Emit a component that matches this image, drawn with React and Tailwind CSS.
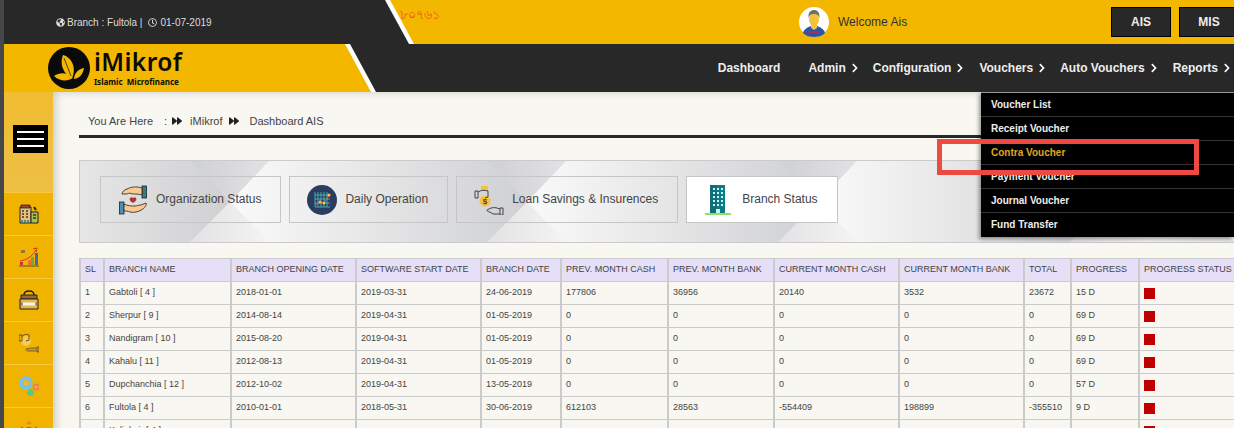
import { FaChevronRight, FaForward, FaGlobeAmericas, FaRegClock } from "react-icons/fa";

const NAV_ITEMS = ["Admin", "Configuration", "Vouchers", "Auto Vouchers", "Reports"];
const NAV_GAPS = ["mr-[14px]", "mr-[15px]", "mr-[14px]", "mr-[15px]", ""];
const MENU_ITEMS = ["Voucher List", "Receipt Voucher", "Contra Voucher", "Payment Voucher", "Journal Voucher", "Fund Transfer"];
const COLUMNS = [
  ["SL", "w-[24px]"],
  ["BRANCH NAME", "w-[127px]"],
  ["BRANCH OPENING DATE", "w-[125px]"],
  ["SOFTWARE START DATE", "w-[125px]"],
  ["BRANCH DATE", "w-[80px]"],
  ["PREV. MONTH CASH", "w-[107px]"],
  ["PREV. MONTH BANK", "w-[106px]"],
  ["CURRENT MONTH CASH", "w-[125px]"],
  ["CURRENT MONTH BANK", "w-[125px]"],
  ["TOTAL", "w-[47px]"],
  ["PROGRESS", "w-[68px]"],
  ["PROGRESS STATUS", "w-[110px]"],
];
const ROWS = [
  ["1", "Gabtoli [ 4 ]", "2018-01-01", "2019-03-31", "24-06-2019", "177806", "36956", "20140", "3532", "23672", "15 D"],
  ["2", "Sherpur [ 9 ]", "2014-08-14", "2019-04-31", "01-05-2019", "0", "0", "0", "0", "0", "69 D"],
  ["3", "Nandigram [ 10 ]", "2015-08-20", "2019-04-31", "01-05-2019", "0", "0", "0", "0", "0", "69 D"],
  ["4", "Kahalu [ 11 ]", "2012-08-13", "2019-04-31", "01-05-2019", "0", "0", "0", "0", "0", "69 D"],
  ["5", "Dupchanchia [ 12 ]", "2012-10-02", "2019-04-31", "13-05-2019", "0", "0", "0", "0", "0", "57 D"],
  ["6", "Fultola [ 4 ]", "2010-01-01", "2018-05-31", "30-06-2019", "612103", "28563", "-554409", "198899", "-355510", "9 D"],
  ["", "Kaliakoir [ 4 ]", "", "", "", "", "", "", "", "", ""],
];

function LogoMark() {
  return (
    <svg width="42" height="42" viewBox="0 0 42 42" className="shrink-0">
      <circle cx="21" cy="21" r="21" fill="#0a0a0a" />
      <path d="M15 8c8 2 14 12 9 23C16 28 11 17 15 8z" fill="#f4b700" />
      <path d="M16 11l7 18" stroke="#0a0a0a" strokeWidth="0.7" />
      <path d="M6 29c6-4 13-4 19 2-6 4-14 3-19-2z" fill="#f4b700" />
      <path d="M36 21c-1 6-4 10-10 11 0-5 4-10 10-11z" fill="#f4b700" />
    </svg>
  );
}

function Avatar() {
  return (
    <svg width="30" height="30" viewBox="0 0 30 30" className="shrink-0">
      <circle cx="15" cy="15" r="15" fill="#fff" />
      <path d="M4 26c1-4 5-6 8-7h6c3 1 7 3 8 7-3 3-7 4-11 4s-8-1-11-4z" fill="#2c55a6" />
      <path d="M12 16h6v5l-3 2-3-2z" fill="#f5c33b" />
      <ellipse cx="15" cy="12" rx="5" ry="7" fill="#f5c33b" />
      <path d="M9.500 11C9 5 12 3 15 3s6 2 5.500 8c-1-3-2-4-5.500-4s-4.500 1-5.500 4z" fill="#6f6f6f" />
      <path d="M9 25h12" stroke="#c2255c" strokeWidth="1.500" />
    </svg>
  );
}

function HandsIcon() {
  return (
    <svg width="30" height="30" viewBox="0 0 30 30" className="shrink-0">
      <rect x="24" y="1" width="4.500" height="12" fill="#2f7f86" stroke="#222" strokeWidth="0.8" />
      <path d="M24 3c-6-2-11-1-15 1-3 1-5 3-5 5h5c2-1 4-1 5 0 3 0 7 0 10 1z" fill="#f9c98f" stroke="#222" strokeWidth="0.8" />
      <rect x="1.500" y="17" width="4.500" height="12" fill="#4a90b8" stroke="#222" strokeWidth="0.8" />
      <path d="M6 19c4 2 7 2 11 2 2 0 3-1 6-1l5-2c1 2-1 4-3 6-4 3-10 4-13 3-2-1-4-1-6-1z" fill="#f9c98f" stroke="#222" strokeWidth="0.8" />
      <path d="M15 18c-3-2-4-3-3-5 1-1 2-1 3 0 1-1 2-1 3 0 1 2 0 3-3 5z" fill="#b5342e" />
    </svg>
  );
}

function ChartCircleIcon() {
  return (
    <svg width="30" height="30" viewBox="0 0 30 30" className="shrink-0">
      <circle cx="15" cy="15" r="15" fill="#2a3c5f" />
      <path d="M8 7v15h15M11 7v15M14 7v15M17 7v15M20 7v15M8 10h15M8 14h15M8 18h15" stroke="#4fc3c0" strokeWidth="0.8" fill="none" />
      <path d="M8 20l5-3 4 1 6-9" stroke="#e85d75" strokeWidth="1" fill="none" />
      <circle cx="13" cy="17" r="1.500" fill="#f5c33b" />
      <circle cx="17" cy="18" r="1.500" fill="#f5c33b" />
      <circle cx="22" cy="10" r="1.500" fill="#f5c33b" />
    </svg>
  );
}

function MoneyHandsIcon() {
  return (
    <svg width="30" height="30" viewBox="0 0 30 30" className="shrink-0">
      <rect x="7" y="1" width="7" height="4" fill="#f5c33b" />
      <circle cx="11" cy="16" r="5.500" fill="#f5c33b" />
      <text x="11" y="19" fontSize="8" fontWeight="700" textAnchor="middle" fill="#444" fontFamily="Liberation Sans">$</text>
      <path d="M1 6h3v7H1zM4 7c3-2 6-2 10-1v6l-3 1" fill="none" stroke="#444" strokeWidth="1" />
      <path d="M29 23v7h-3v-7zM26 24c-3-1-5-2-9-1l-4 2c0 1 1 2 3 2l3 2h7" fill="none" stroke="#444" strokeWidth="1" />
    </svg>
  );
}

function BuildingIcon() {
  return (
    <svg width="30" height="30" viewBox="0 0 30 30" className="shrink-0">
      <rect x="1" y="28" width="26" height="2" fill="#8ee06b" />
      <path d="M6 0h15v28H6z" fill="#0e7c86" />
      <path d="M6 0h7v28H6z" fill="#0f6f78" />
      <path d="M9 4h2M13 4h2M17 4h2M9 8h2M13 8h2M17 8h2M9 12h2M13 12h2M17 12h2M9 16h2M13 16h2M17 16h2M9 20h2M13 20h2M17 20h2" stroke="#c9f4f6" strokeWidth="2" />
      <rect x="12" y="24" width="4" height="4" fill="#c9f4f6" />
    </svg>
  );
}

function SideBuilding() {
  return (
    <svg width="20" height="20" viewBox="0 0 20 20">
      <path d="M1 3h11v16H1z" fill="#e8c07a" stroke="#222" strokeWidth="1" />
      <path d="M2 1h9v3H2z" fill="#b03a3a" stroke="#222" strokeWidth="0.8" />
      <path d="M12 8h7v11h-7z" fill="#a9bf5a" stroke="#222" strokeWidth="1" />
      <path d="M3 7h2M7 7h2M3 10h2M7 10h2M3 13h2M7 13h2M14 11h3M14 14h3" stroke="#4a3320" strokeWidth="1.500" />
      <path d="M3 16v3M6 16v3M9 16v3" stroke="#2a7a86" strokeWidth="1.500" />
      <path d="M15 3l2 3" stroke="#222" strokeWidth="2" />
    </svg>
  );
}

function SideChart() {
  return (
    <svg width="20" height="20" viewBox="0 0 20 20">
      <path d="M0 19h20" stroke="#5a4a20" strokeWidth="1" />
      <rect x="2" y="3" width="4" height="3" fill="#8a7a3a" />
      <rect x="1" y="15" width="3" height="3" fill="#d32f2f" />
      <rect x="9" y="13" width="3" height="5" fill="#f2701d" />
      <rect x="12" y="10" width="3" height="8" fill="#6aa84f" />
      <rect x="16" y="6" width="3" height="12" fill="#3d6aa8" />
      <path d="M1 14c6-1 12-4 16-11" stroke="#d32f2f" strokeWidth="1" fill="none" />
      <path d="M14 2l4-1-1 4" stroke="#d32f2f" strokeWidth="1" fill="none" />
    </svg>
  );
}

function SideToolbox() {
  return (
    <svg width="20" height="20" viewBox="0 0 20 20">
      <path d="M5 5c0-2 1-4 5-4s5 2 5 4" fill="none" stroke="#222" strokeWidth="1.500" />
      <path d="M2 5h16v4H2z" fill="#9c6b2c" stroke="#222" strokeWidth="1" />
      <path d="M1 9h18v10H1z" fill="#e5b64a" stroke="#222" strokeWidth="1" />
      <path d="M3 14h14" stroke="#f4f4f4" strokeWidth="3" />
      <path d="M3 12.500v3M17 12.500v3" stroke="#444" strokeWidth="1" />
    </svg>
  );
}

function SideMoney() {
  return (
    <svg width="20" height="20" viewBox="0 0 20 20">
      <circle cx="7" cy="8" r="5" fill="#f4cc55" />
      <path d="M0 2h3v6H0zM3 3c3-2 5-2 7-1v5l-3 1" fill="none" stroke="#6a5420" strokeWidth="1" />
      <path d="M20 14v5h-2v-5zM18 15h-6l-5 1c0 1 1 2 2 2h9" fill="#c99a30" stroke="#6a5420" strokeWidth="0.8" />
    </svg>
  );
}

function SideGears() {
  return (
    <svg width="20" height="20" viewBox="0 0 20 20">
      <circle cx="7" cy="7" r="5" fill="none" stroke="#6fc3ee" strokeWidth="3.500" />
      <circle cx="7" cy="7" r="2.500" fill="#e8b84a" />
      <circle cx="17" cy="11" r="2.500" fill="#e8b84a" stroke="#f0823c" strokeWidth="2" />
      <circle cx="11.500" cy="16.500" r="3.500" fill="#5fc77f" />
    </svg>
  );
}

function SidePeople() {
  return (
    <svg width="20" height="20" viewBox="0 0 20 20">
      <circle cx="10" cy="12" r="4" fill="#6a6ab8" />
      <path d="M8 5l2-3 2 3z" fill="#e8573a" />
      <path d="M1 10l2-3 2 3zM15 10l2-3 2 3z" fill="#e8573a" />
      <circle cx="10" cy="4" r="1.500" fill="#f0823c" />
    </svg>
  );
}

const SIDE_ICONS = [SideBuilding, SideChart, SideToolbox, SideMoney, SideGears, SidePeople];

const TABS = [
  ["Organization Status", HandsIcon],
  ["Daily Operation", ChartCircleIcon],
  ["Loan Savings & Insurences", MoneyHandsIcon],
  ["Branch Status", BuildingIcon],
];

// background chevrons of the tab panel, x is the centre of each cross
const CROSSES = [150, 447, 738, 1030];

function PanelBackground() {
  return (
    <svg className="absolute inset-0" width="1155" height="82" viewBox="0 0 1155 82">
      <defs>
        <linearGradient id="seg">
          <stop offset="0" stopColor="#fafafa" />
          <stop offset="1" stopColor="#cfd0d2" />
        </linearGradient>
        <linearGradient id="first">
          <stop offset="0" stopColor="#e6e6e6" />
          <stop offset="1" stopColor="#cfd0d2" />
        </linearGradient>
        <linearGradient id="top">
          <stop offset="0" stopColor="#cfd0d2" />
          <stop offset="1" stopColor="#e2e2e4" />
        </linearGradient>
        <linearGradient id="bottom">
          <stop offset="0" stopColor="#e2e2e4" />
          <stop offset="1" stopColor="#f4f4f4" />
        </linearGradient>
      </defs>
      <rect x="0" y="0" width="150" height="82" fill="url(#first)" />
      {CROSSES.map((x, i) => (
        <rect key={x} x={x} y="0" width={(CROSSES[i + 1] ?? x + 292) - x} height="82" fill="url(#seg)" />
      ))}
      {CROSSES.map((x) => (
        <g key={x}>
          <polygon points={`${x - 39},0 ${x + 39},0 ${x},41`} fill="url(#top)" />
          <polygon points={`${x - 41},82 ${x + 41},82 ${x},41`} fill="url(#bottom)" />
        </g>
      ))}
    </svg>
  );
}

export default function App() {
  return (
    <div className="relative flex w-[1234px] h-[428px] overflow-hidden bg-[#f8f7f1] font-['Liberation_Sans',sans-serif]">
      <div className="w-[4px] shrink-0 bg-[#45474a]" />
      <div className="flex-1 min-w-0 flex flex-col">
        {/* Top bar */}
        <div className="relative h-[44px] shrink-0 bg-[#f4b700] flex items-center">
          <div className="absolute inset-0 bg-white [clip-path:polygon(0_0,386px_0,410px_100%,0_100%)]" />
          <div className="absolute inset-0 bg-[#282828] [clip-path:polygon(0_0,381px_0,405px_100%,0_100%)]" />
          <div className="relative flex items-center pl-[52px] w-[396px] text-[10px] text-[#ddd]">
            <FaGlobeAmericas className="w-[9px] h-[9px] mr-[2px]" />
            <span>Branch : Fultola |</span>
            <FaRegClock className="w-[9px] h-[9px] ml-[6px] mr-[3px]" />
            <span>01-07-2019</span>
          </div>
          <span className="relative -mt-[14px] text-[13px] text-[#f0571a] font-['Noto_Sans','DejaVu_Sans',sans-serif]">৮০৭৬১</span>
          <div className="absolute left-[795px] top-[7px] flex items-center gap-[9px] text-[12px] text-[#333]">
            <Avatar />
            <span>Welcome Ais</span>
          </div>
          <div className="absolute left-[1107px] top-[7px] flex gap-[8px]">
            <div className="w-[60px] h-[30px] flex items-center justify-center bg-[#282828] border border-black text-[12px] font-bold text-[#eee]">AIS</div>
            <div className="w-[60px] h-[30px] flex items-center justify-center bg-[#282828] border border-black text-[12px] font-bold text-[#eee]">MIS</div>
          </div>
        </div>

        {/* Logo and navigation */}
        <div className="relative h-[48px] shrink-0 bg-[#282828] flex items-center">
          <div className="absolute inset-0 bg-white [clip-path:polygon(0_0,346px_0,372px_100%,0_100%)]" />
          <div className="absolute inset-0 bg-[#f4b700] [clip-path:polygon(0_0,341px_0,367px_100%,0_100%)]" />
          <div className="relative flex items-center gap-[4px] pl-[44px]">
            <LogoMark />
            <div className="flex flex-col pt-[1px] font-['Noto_Sans',sans-serif] text-[#0a0a0a]">
              <span className="text-[24.500px] leading-[24px] font-semibold tracking-[0.4px]">iMikrof</span>
              <span className="mt-[3px] text-[8px] leading-[10px] font-bold whitespace-pre">Islamic  Microfinance</span>
            </div>
          </div>
          <div className="relative ml-auto flex items-center pr-[3px] text-[12px] font-bold text-[#eee]">
            <span className="mr-[28px]">Dashboard</span>
            {NAV_ITEMS.map((item, i) => (
              <div key={item} className={`flex items-center gap-[5px] ${NAV_GAPS[i]}`}>
                <span>{item}</span>
                <FaChevronRight className="w-[8px] h-[10px] text-white" />
              </div>
            ))}
          </div>
        </div>

        <div className="flex flex-1 min-h-0">
          {/* Sidebar */}
          <div className="w-[49px] shrink-0 flex flex-col bg-[#f0b400] z-10">
            <div className="h-[100px] shrink-0 flex items-center justify-center bg-gradient-to-b from-[#f0bc30] to-[#edbf44]">
              <div className="w-[35px] h-[28px] ml-[3px] bg-black flex flex-col justify-center gap-[5px] px-[4px] -mt-[6px]">
                <div className="h-[2px] bg-white" />
                <div className="h-[2px] bg-white" />
                <div className="h-[2px] bg-white" />
              </div>
            </div>
            {SIDE_ICONS.map((Icon, i) => (
              <div key={i} className="h-[43px] shrink-0 flex items-center justify-center border-t border-[#f6c83f]">
                <Icon />
              </div>
            ))}
          </div>

          {/* Content */}
          <div className="relative flex-1 min-w-0 pl-[26px] overflow-hidden">
            <div className="absolute inset-0 shadow-[inset_7px_4px_8px_-4px_rgba(0,0,0,0.18)]" />
            <div className="relative h-[46px] pl-[9px] pb-[6px] flex items-end border-b-[3px] border-[#282828] text-[11px] text-[#444]">
              <span>You Are Here</span>
              <span className="ml-[11px]">:</span>
              <FaForward className="w-[10px] h-[10px] ml-[5px] mb-[3px] text-[#222]" />
              <span className="ml-[8px]">iMikrof</span>
              <FaForward className="w-[10px] h-[10px] ml-[7px] mb-[3px] text-[#222]" />
              <span className="ml-[10px]">Dashboard AIS</span>
            </div>

            <div className="relative mt-[22px] w-[1155px] h-[83px] border-y border-l border-[#cbcbcb] overflow-hidden">
              <PanelBackground />
              <div className="relative flex gap-[8px] pl-[20px] pt-[15px]">
                {TABS.map(([label, Icon], i) => (
                  <div
                    key={label}
                    className={`h-[47px] flex items-center gap-[8px] pl-[17px] pr-[19px] border border-[#c6c6c6] text-[12px] text-[#444] ${
                      i === 3 ? "bg-white" : ""
                    }`}
                  >
                    <Icon />
                    <span className="-mt-[1px]">{label}</span>
                  </div>
                ))}
              </div>
            </div>

            <table className="relative mt-[15px] w-[1169px] table-fixed border-collapse text-[9px] text-[#444]">
              <thead>
                <tr>
                  {COLUMNS.map(([label, width]) => (
                    <th key={label} className={`${width} h-[23px] p-0 pl-[4px] text-left font-normal whitespace-nowrap bg-[#e5dff8] border-y border-x-2 border-[#cbcbcb]`}>
                      {label}
                    </th>
                  ))}
                </tr>
              </thead>
              <tbody>
                {ROWS.map((row, r) => (
                  <tr key={r}>
                    {row.map((cell, c) => (
                      <td key={c} className="h-[23px] p-0 pl-[4px] whitespace-nowrap border-y border-x-2 border-[#cbcbcb]">
                        {cell}
                      </td>
                    ))}
                    <td className="h-[23px] p-0 pl-[4px] border-y border-x-2 border-[#cbcbcb]">
                      <div className="w-[11px] h-[11px] bg-[#c00000]" />
                    </td>
                  </tr>
                ))}
              </tbody>
            </table>
          </div>
        </div>
      </div>

      {/* Vouchers dropdown */}
      <div className="absolute left-[981px] top-[92px] w-[253px] bg-black border-t border-[#999] shadow-[-2px_2px_4px_rgba(0,0,0,0.4)] z-20">
        {MENU_ITEMS.map((item, i) => (
          <div
            key={item}
            className={`h-[24px] flex items-center pl-[10px] text-[10px] font-bold border-b ${
              i === 2 ? "text-[#e3a521]" : "text-[#eee]"
            } ${i < MENU_ITEMS.length - 1 ? "border-[#333]" : "border-black"}`}
          >
            {item}
          </div>
        ))}
      </div>

      {/* Red annotation box */}
      <div className="absolute left-[937px] top-[139px] w-[262px] h-[36px] border-[5px] border-[#ef4a42] z-30" />
    </div>
  );
}
